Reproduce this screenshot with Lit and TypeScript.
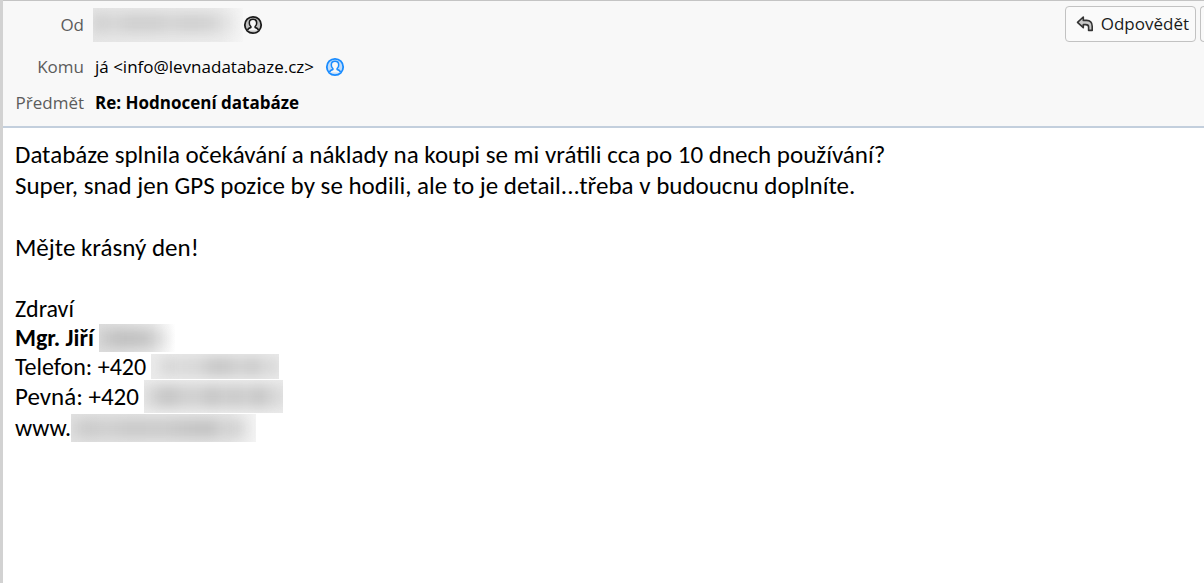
import { LitElement, html, css, svg } from "lit";
import { customElement, property } from "lit/decorators.js";

/** A stretch of private text, shown as soft grey smudges. */
@customElement("redacted-text")
class RedactedText extends LitElement {
  @property() kind = "sender";

  static styles = css`
    :host { display: block; flex: none; }
    .box { overflow: hidden; }
    .ink { height: 100%; filter: blur(6px); }
    .sender { width: 150px; height: 34px; background: linear-gradient(90deg, #e6e6e6, #ececec 85%, #f6f6f6); }
    .sender .ink {
      background: linear-gradient(90deg, #cfcfcf 2%, #d8d8d8 14%, #d0d0d0 24%, #d0d0d0 44%, #d6d6d6 52%, #d0d0d0 62%, #d3d3d3 78%, #e2e2e2 88%, transparent 98%) 0 5px / 100% 20px no-repeat;
    }
    .name { width: 76px; height: 28px; background: linear-gradient(90deg, #dedede, #e8e8e8 70%, #ffffff); }
    .name .ink {
      background: linear-gradient(90deg, #cccccc 4%, #bfbfbf 30%, #c4c4c4 62%, #dddddd 80%, transparent 94%) 0 5px / 100% 19px no-repeat;
    }
    .phone { width: 128px; height: 25px; background: #ebebeb; }
    .phone .ink {
      background: linear-gradient(90deg, transparent 3%, #d6d6d6 12%, #dcdcdc 24%, #d6d6d6 30%, #dadada 36%, #c8c8c8 47%, #c8c8c8 60%, #d3d3d3 68%, #cacaca 82%, #dddddd 90%, #d7d7d7 96%) 0 3px / 100% 19px no-repeat;
    }
    .line { width: 139px; height: 33px; background: linear-gradient(#ebebeb, #e5e5e5 50%, #ececec); }
    .line .ink {
      background: linear-gradient(90deg, #dedede 2%, #c6c6c6 14%, #c8c8c8 23%, #d4d4d4 29%, #cccccc 34%, #d4d4d4 39%, #c4c4c4 48%, #d0d0d0 58%, #c8c8c8 66%, #d2d2d2 73%, #c4c4c4 84%, #d8d8d8 92%, #d8d8d8 96%) 0 6px / 100% 21px no-repeat;
    }
    .site { width: 185px; height: 28px; background: linear-gradient(90deg, #e2e2e2, #e6e6e6 85%, #f4f4f4); }
    .site .ink {
      background: linear-gradient(90deg, #d4d4d4 2%, #c9c9c9 10%, #d0d0d0 18%, #c9c9c9 33%, #cccccc 48%, #c6c6c6 62%, #c2c2c2 75%, #d4d4d4 82%, #d0d0d0 88%, transparent 98%) 0 5px / 100% 19px no-repeat;
    }
  `;

  render() {
    return html`<div class="box ${this.kind}"><div class="ink"></div></div>`;
  }
}

const contactIcon = svg`
  <circle cx="10" cy="10" r="8.2" fill="currentColor" fill-opacity="0.25" stroke="currentColor" stroke-width="1.8"/>
  <path d="M4.6 15.4C4.8 13.6 6 13.1 7.9 12.6V11.6C6.8 10.7 6.3 9.4 6.3 7.9C6.3 5.7 7.8 4.3 10 4.3S13.7 5.7 13.7 7.9C13.7 9.4 13.2 10.7 12.1 11.6V12.6C14 13.1 15.2 13.6 15.4 15.4"
    fill="#f8f8f8" stroke="currentColor" stroke-width="1.5" stroke-linejoin="round"/>`;

@customElement("app-root")
class AppRoot extends LitElement {
  static styles = css`
    :host {
      display: block;
      box-sizing: border-box;
      min-height: 100vh;
      border-left: 3px solid #d2d2d2;
      background: #ffffff;
      color: #000000;
      overflow: hidden;
    }
    header {
      display: flex;
      justify-content: space-between;
      align-items: flex-start;
      background: #f8f8f8;
      border-top: 1px solid #c4c4c4;
      border-bottom: 2px solid #c3cfdd;
      font: 17px/24px "Open Sans", "Noto Sans", sans-serif;
    }
    .fields {
      display: grid;
      grid-template-columns: 81px auto;
      column-gap: 9px;
      grid-template-rows: 48px 36px 35px;
      align-items: center;
      margin: 0;
      padding-bottom: 6px;
    }
    dt { text-align: right; color: #5c5c5c; }
    dd { display: flex; align-items: center; margin: 0; white-space: nowrap; }
    .address { gap: 11px; padding-left: 2px; }
    .subject { padding-left: 2px; font-weight: 700; }
    .contact {
      display: flex;
      padding: 0;
      border: 0;
      background: none;
      color: #1a1a1a;
    }
    .contact.known { color: #1a8cff; }
    .contact svg { width: 20px; height: 20px; }
    .actions { display: flex; gap: 4px; padding-top: 5px; }
    .action {
      display: flex;
      align-items: center;
      gap: 7px;
      box-sizing: border-box;
      height: 36px;
      padding: 0 6px 0 10px;
      border: 1px solid #c2c2c2;
      border-radius: 4px;
      background: #fafafa;
      color: #1a1a1a;
      font: inherit;
      white-space: nowrap;
    }
    .action svg { width: 18px; height: 18px; }
    .cut { width: 4px; padding: 0; border-right: 0; border-radius: 4px 0 0 4px; }
    main {
      padding: 11px 12px;
      font: 25px/31px Carlito, Lato, sans-serif;
    }
    p { margin: 0 0 31px; }
    .signature { font-size: 24px; line-height: 29px; font-style: normal; }
    .row { display: flex; align-items: center; height: 29px; gap: 5px; }
    .tall { height: 31px; }
    .large { font-size: 25px; }
    .joined { gap: 0; }
  `;

  render() {
    return html`
      <header>
        <dl class="fields">
          <dt>Od</dt>
          <dd>
            <redacted-text kind="sender"></redacted-text>
            <button class="contact" aria-label="Kontakt"><svg viewBox="0 0 20 20">${contactIcon}</svg></button>
          </dd>
          <dt>Komu</dt>
          <dd class="address">
            <span>já &lt;info@levnadatabaze.cz&gt;</span>
            <button class="contact known" aria-label="Kontakt"><svg viewBox="0 0 20 20">${contactIcon}</svg></button>
          </dd>
          <dt>Předmět</dt>
          <dd class="subject">Re: Hodnocení databáze</dd>
        </dl>
        <div class="actions">
          <button class="action">
            <svg viewBox="0 0 18 18" fill="#c9c9c9" stroke="#333333" stroke-width="1.6" stroke-linejoin="round">
              <path d="M7.3 2L1.5 7.3L7.3 12.6V9.6H9.8C11.8 9.6 12.6 10.4 12.6 12V15.4H16.2V11.2C16.2 7.4 14 5.4 10.6 5.4H7.3Z"/>
            </svg>
            Odpovědět
          </button>
          <button class="action cut" aria-label="Další"></button>
        </div>
      </header>
      <main>
        <p>Databáze splnila očekávání a náklady na koupi se mi vrátili cca po 10 dnech používání?<br>Super, snad jen GPS pozice by se hodili, ale to je detail...třeba v budoucnu doplníte.</p>
        <p>Mějte krásný den!</p>
        <address class="signature">
          <div class="row">Zdraví</div>
          <div class="row"><b>Mgr. Jiří</b><redacted-text kind="name"></redacted-text></div>
          <div class="row">Telefon: +420<redacted-text kind="phone"></redacted-text></div>
          <div class="row tall large">Pevná: +420<redacted-text kind="line"></redacted-text></div>
          <div class="row tall joined">www.<redacted-text kind="site"></redacted-text></div>
        </address>
      </main>
    `;
  }
}
